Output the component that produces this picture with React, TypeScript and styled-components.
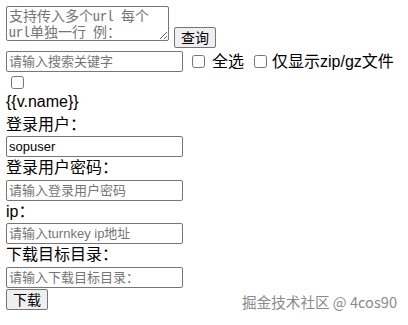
import styled, { createGlobalStyle } from "styled-components";

const GlobalStyle = createGlobalStyle`
  html, body {
    margin: 0;
    padding: 0;
    background: #ffffff;
  }
  body {
    font-family: "Liberation Sans", "Noto Sans CJK SC", sans-serif;
    font-size: 16px;
    color: #000000;
  }
`;

const Page = styled.div`
  position: relative;
  width: 408px;
  height: 325px;
  padding: 6px;
  box-sizing: border-box;
  display: flex;
  flex-direction: column;
`;

const Row = styled.div<{ $top?: number }>`
  display: flex;
  align-items: center;
  margin-top: ${({ $top }) => $top ?? 0}px;
`;

const TopRow = styled(Row)`
  align-items: flex-start;
`;

const UrlBox = styled.textarea`
  width: 163px;
  height: 35px;
  box-sizing: border-box;
  padding: 0 14px 0 2px;
  border: 1px solid #767676;
  border-radius: 2px;
  font-family: "Noto Sans Mono CJK SC", "Liberation Mono", "Noto Sans CJK SC", monospace;
  font-size: 14px;
  line-height: 16px;
  resize: both;
  overflow: hidden;
  &::placeholder {
    color: #757575;
  }
`;

const Button = styled.button<{ $top?: number; $left?: number }>`
  height: 21px;
  box-sizing: border-box;
  padding: 0 6px;
  margin-top: ${({ $top }) => $top ?? 0}px;
  margin-left: ${({ $left }) => $left ?? 0}px;
  border: 1px solid #767676;
  border-radius: 2px;
  background: #efefef;
  font-family: "Noto Sans CJK SC", sans-serif;
  font-size: 14px;
  line-height: 17px;
  color: #000000;
`;

const Field = styled.input`
  width: 177px;
  height: 21px;
  box-sizing: border-box;
  padding: 1px 2px;
  border: 1px solid #767676;
  border-radius: 2px;
  font-family: "Liberation Sans", "Noto Sans CJK SC", sans-serif;
  font-size: 13px;
  color: #000000;
  &::placeholder {
    color: #757575;
  }
`;

const Check = styled.input.attrs({ type: "checkbox" })<{ $left?: number; $right?: number }>`
  width: 13px;
  height: 13px;
  margin: 0 ${({ $right }) => $right ?? 6}px 0 ${({ $left }) => $left ?? 9}px;
`;

const Label = styled.div<{ $top?: number }>`
  line-height: 22.5px;
  height: 22.5px;
  margin-top: ${({ $top }) => $top ?? 0}px;
`;

const InlineText = styled.span`
  line-height: 20px;
`;

const Watermark = styled.div`
  position: absolute;
  right: 11px;
  bottom: 13px;
  font-family: "Noto Sans CJK SC", sans-serif;
  font-size: 14.6px;
  color: #8a8a8a;
`;

export default function App() {
  return (
    <>
      <GlobalStyle />
      <Page>
        <TopRow>
          <UrlBox placeholder="支持传入多个url 每个url单独一行 例：" />
          <Button $top={21} $left={5}>
            查询
          </Button>
        </TopRow>
        <Row $top={3}>
          <Field placeholder="请输入搜索关键字" />
          <Check $left={9} $right={7} />
          <InlineText>全选</InlineText>
          <Check $left={10} $right={5} />
          <InlineText>仅显示zip/gz文件</InlineText>
        </Row>
        <Row $top={4}>
          <Check $left={5} />
        </Row>
        <Label $top={2}>{"{{v.name}}"}</Label>
        <Label>登录用户：</Label>
        <Field defaultValue="sopuser" />
        <Label>登录用户密码：</Label>
        <Field placeholder="请输入登录用户密码" />
        <Label>ip：</Label>
        <Field placeholder="请输入turnkey ip地址" />
        <Label>下载目标目录：</Label>
        <Field placeholder="请输入下载目标目录：" />
        <Row $top={1}>
          <Button>下载</Button>
        </Row>
        <Watermark>掘金技术社区 @ 4cos90</Watermark>
      </Page>
    </>
  );
}
